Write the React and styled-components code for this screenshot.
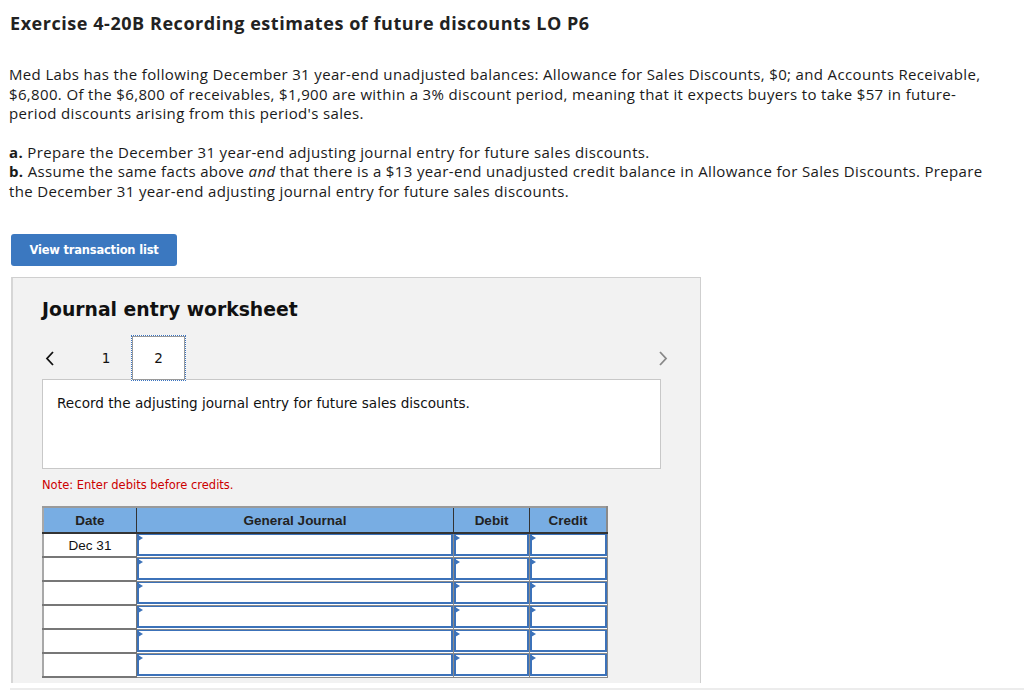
import React from 'react'
import styled, { createGlobalStyle } from 'styled-components'

const Global = createGlobalStyle`
  body {
    margin: 0;
    background: #fff;
    font-family: "Open Sans", Lato, sans-serif;
    color: #1a1a1a;
  }
`

const Page = styled.div`
  padding: 12px 0 0 10px;
`

const Title = styled.h1`
  margin: 0;
  font-size: 18px;
  line-height: 22px;
  font-weight: 700;
  letter-spacing: 0.55px;
  color: #222;
`

const Para = styled.p`
  margin: ${p => p.top || 0}px 0 0 -1px;
  width: 1010px;
  font-size: 15px;
  line-height: 19.5px;
  letter-spacing: 0.35px;
`

const ViewButton = styled.button`
  display: block;
  margin: 33px 0 0 1px;
  width: 166px;
  height: 32px;
  border: none;
  border-radius: 3px;
  background: #3b78c0;
  color: #fff;
  font-family: "DejaVu Sans", Verdana, sans-serif;
  font-weight: 700;
  font-size: 11.5px;
  letter-spacing: -0.2px;
`

const Panel = styled.div`
  margin: 11px 0 0 1px;
  width: 658px;
  height: 386px;
  padding: 19px 0 0 29px;
  background: #f2f2f2;
  border: 1px solid #cfcfcf;
  border-left: 2px solid #d6d6d6;
  border-bottom: none;
`

const Heading = styled.h2`
  margin: 0;
  font-family: "DejaVu Sans", Verdana, sans-serif;
  font-size: 18.8px;
  line-height: 26px;
  font-weight: 700;
  color: #111;
`

const Nav = styled.div`
  display: flex;
  align-items: center;
  height: 46px;
  margin-top: 12px;
  width: 630px;
  position: relative;
  z-index: 1;
`

const Arrow = styled.span`
  display: flex;
  width: 14px;
  margin-left: ${p => p.left || 0}px;
  color: ${p => (p.dim ? '#888' : '#111')};
`

const Step = styled.div`
  width: ${p => (p.active ? 53 : 20)}px;
  height: ${p => (p.active ? 44 : 46)}px;
  display: flex;
  align-items: center;
  justify-content: center;
  font-family: "DejaVu Sans", Verdana, sans-serif;
  font-size: 13.5px;
  color: #111;
  margin-left: ${p => p.left || 0}px;
  background: ${p => (p.active ? '#fff' : 'transparent')};
  border: ${p => (p.active ? '1px dotted #3b74c0' : 'none')};
  outline: ${p => (p.active ? '1px solid #9a9a9a' : 'none')};
  outline-offset: -2px;
`

const Spacer = styled.div`
  flex: 1;
`

const PromptBox = styled.div`
  margin-top: -2px;
  width: 603px;
  height: 73px;
  padding: 15px 0 0 14px;
  background: #fff;
  border: 1px solid #c8c8c8;
  font-family: "DejaVu Sans", Verdana, sans-serif;
  font-size: 13.6px;
  color: #111;
`

const Note = styled.div`
  margin-top: 9px;
  font-family: "DejaVu Sans", Verdana, sans-serif;
  font-size: 11.5px;
  color: #c00;
`

const Table = styled.table`
  margin-top: 14px;
  border-collapse: collapse;
  font-family: "Liberation Sans", Arial, sans-serif;
  font-size: 13px;
  border-left: 2px solid #a8a8a8;
  border-top: 2px solid #9a9a9a;
`

const Th = styled.th`
  width: ${p => p.w}px;
  height: 24px;
  padding: 0;
  background: #78ade3;
  color: #222;
  font-size: 13.5px;
  font-weight: 700;
  border-right: 1px solid #333;
  border-bottom: 2px solid #333;
  &:last-child {
    border-right: 2px solid #8a8a8a;
  }
`

const DateCell = styled.td`
  height: 22px;
  padding: 0;
  text-align: center;
  background: #fff;
  border-right: 1px solid #777;
  border-bottom: 2px solid #777;
  font-size: 13.5px;
  color: #111;
`

const InputCell = styled.td`
  padding: 0;
  height: 22px;
  background: #fff;
  border: 1px solid #8a8a8a;
  border-top: none;
  position: relative;
`

const Field = styled.div`
  height: 19px;
  border: 2px solid #3c72b9;
  border-top: 1px solid #3c72b9;
  &::before {
    content: '';
    position: absolute;
    left: 1px;
    top: 1px;
    border-left: 5px solid #3c72b9;
    border-top: 3.5px solid transparent;
    border-bottom: 3.5px solid transparent;
  }
`

const Rule = styled.div`
  height: 2px;
  margin-top: 5px;
  background: #ececec;
`

function Chevron({ dir }) {
  const d = dir === 'left' ? 'M8 1 L2 7.5 L8 14' : 'M2 1 L8 7.5 L2 14'
  return (
    <svg width="10" height="15" viewBox="0 0 10 15">
      <path d={d} fill="none" stroke="currentColor" strokeWidth="1.8" />
    </svg>
  )
}

const rows = ['Dec 31', '', '', '', '', '']

export default function App() {
  return (
    <>
      <Global />
      <Page>
        <Title>Exercise 4-20B Recording estimates of future discounts LO P6</Title>
        <Para top={31}>
          Med Labs has the following December 31 year-end unadjusted balances: Allowance for Sales
          Discounts, $0; and Accounts Receivable,
          <br />
          $6,800. Of the $6,800 of receivables, $1,900 are within a 3% discount period, meaning that it
          expects buyers to take $57 in future-
          <br />
          period discounts arising from this period's sales.
        </Para>
        <Para top={19}>
          <b>a.</b> Prepare the December 31 year-end adjusting journal entry for future sales discounts.
          <br />
          <b>b.</b> Assume the same facts above <i>and</i> that there is a $13 year-end unadjusted credit
          balance in Allowance for Sales Discounts. Prepare
          <br />
          the December 31 year-end adjusting journal entry for future sales discounts.
        </Para>
        <ViewButton>View transaction list</ViewButton>
        <Panel>
          <Heading>Journal entry worksheet</Heading>
          <Nav>
            <Arrow left={3}>
              <Chevron dir="left" />
            </Arrow>
            <Step left={37}>1</Step>
            <Step left={15} active>
              2
            </Step>
            <Spacer />
            <Arrow dim>
              <Chevron dir="right" />
            </Arrow>
          </Nav>
          <PromptBox>Record the adjusting journal entry for future sales discounts.</PromptBox>
          <Note>Note: Enter debits before credits.</Note>
          <Table>
            <thead>
              <tr>
                <Th w={92}>Date</Th>
                <Th w={316}>General Journal</Th>
                <Th w={75}>Debit</Th>
                <Th w={76}>Credit</Th>
              </tr>
            </thead>
            <tbody>
              {rows.map((d, i) => (
                <tr key={i}>
                  <DateCell>{d}</DateCell>
                  <InputCell>
                    <Field />
                  </InputCell>
                  <InputCell>
                    <Field />
                  </InputCell>
                  <InputCell>
                    <Field />
                  </InputCell>
                </tr>
              ))}
            </tbody>
          </Table>
        </Panel>
        <Rule />
      </Page>
    </>
  )
}
